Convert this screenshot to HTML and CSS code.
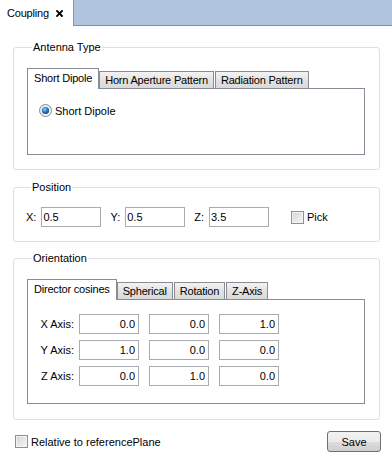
FILE: index.html
```html
<!DOCTYPE html>
<html lang="en">
<head>
    <meta charset="UTF-8">
    <title>Coupling</title>
    <link rel="stylesheet" href="styles.css">
</head>
<body>

<div class="doc-tabs">
    <div class="doc-tab">
        <span>Coupling</span>
        <svg class="close" width="7" height="7" viewBox="0 0 7 7"><path d="M1 1 L6 6 M6 1 L1 6" stroke="#000" stroke-width="1.8" stroke-linecap="square"/></svg>
    </div>
</div>

<div class="content">
    <fieldset class="group group-antenna">
        <legend>Antenna Type</legend>
        <div class="tabs">
            <div class="tab active">Short Dipole</div>
            <div class="tab">Horn Aperture Pattern</div>
            <div class="tab">Radiation Pattern</div>
        </div>
        <div class="pane pane-antenna">
            <label class="radio-line">
                <svg class="radio" width="13" height="13" viewBox="0 0 13 13">
                    <defs>
                        <radialGradient id="dot" cx="0.4" cy="0.35" r="0.7">
                            <stop offset="0" stop-color="#8fd6fb"/>
                            <stop offset="0.5" stop-color="#2a7fc8"/>
                            <stop offset="1" stop-color="#0d3f7a"/>
                        </radialGradient>
                        <linearGradient id="ring" x1="0" y1="0" x2="1" y2="1">
                            <stop offset="0" stop-color="#e2e2e2"/>
                            <stop offset="1" stop-color="#fdfdfd"/>
                        </linearGradient>
                    </defs>
                    <circle cx="6.5" cy="6.5" r="6" fill="url(#ring)" stroke="#8a8a8a"/>
                    <circle cx="6.5" cy="6.5" r="3.6" fill="url(#dot)"/>
                </svg>
                <span>Short Dipole</span>
            </label>
        </div>
    </fieldset>

    <fieldset class="group group-position">
        <legend>Position</legend>
        <div class="pos-row">
            <span class="pos-label">X:</span>
            <input class="field" type="text" value="0.5">
            <span class="pos-label">Y:</span>
            <input class="field" type="text" value="0.5">
            <span class="pos-label">Z:</span>
            <input class="field" type="text" value="3.5">
            <span class="check pick"></span>
            <span>Pick</span>
        </div>
    </fieldset>

    <fieldset class="group group-orient">
        <legend>Orientation</legend>
        <div class="tabs">
            <div class="tab active">Director cosines</div>
            <div class="tab">Spherical</div>
            <div class="tab">Rotation</div>
            <div class="tab">Z-Axis</div>
        </div>
        <div class="pane pane-orient">
            <div class="axis-row">
                <span class="axis-label">X Axis:</span>
                <input class="field num" type="text" value="0.0">
                <input class="field num" type="text" value="0.0">
                <input class="field num" type="text" value="1.0">
            </div>
            <div class="axis-row">
                <span class="axis-label">Y Axis:</span>
                <input class="field num" type="text" value="1.0">
                <input class="field num" type="text" value="0.0">
                <input class="field num" type="text" value="0.0">
            </div>
            <div class="axis-row">
                <span class="axis-label">Z Axis:</span>
                <input class="field num" type="text" value="0.0">
                <input class="field num" type="text" value="1.0">
                <input class="field num" type="text" value="0.0">
            </div>
        </div>
    </fieldset>

    <div class="footer">
        <span class="check"></span>
        <span class="footer-label">Relative to referencePlane</span>
        <button class="save">Save</button>
    </div>
</div>

</body>
</html>
```

FILE: styles.css
```css
body {
    margin: 0;
    font-family: "Liberation Sans", Arial, sans-serif;
    font-size: 11px;
    color: #000;
    background-color: #fff;
}
.doc-tabs {
    display: flex;
    height: 25px;
    background-color: #b0c4de;
    border-bottom: 1px solid #838b97;
}
.doc-tab {
    display: flex;
    align-items: center;
    width: 66px;
    height: 26px;
    padding-left: 7px;
    background-color: #fff;
    border-right: 1px solid #8d939c;
    margin-bottom: -1px;
    letter-spacing: -0.2px;
}
.doc-tab .close {
    margin-left: 7px;
    margin-top: 1px;
}
.content {
    padding: 0 12px 0 13px;
}
.group {
    margin: 0;
    padding: 0 14px 14px 13px;
    border: 1px solid #d9e0e6;
    border-radius: 3px;
    min-width: 0;
}
.group legend {
    margin-left: 5px;
    padding: 0 1px;
    line-height: 13px;
}
.group-antenna {
    margin-top: 15px;
    padding-top: 14px;
}
.group-position {
    margin-top: 11px;
    padding-top: 13px;
    padding-left: 12px;
}
.group-orient {
    margin-top: 10px;
    padding-top: 14px;
    padding-bottom: 15px;
}

/* tabs inside the groups */
.tabs {
    display: flex;
    align-items: flex-end;
    height: 20px;
}
.tab {
    height: 16px;
    line-height: 16px;
    padding: 0 5px;
    border: 1px solid #898c95;
    border-bottom: none;
    background: linear-gradient(#f3f3f3, #e3e3e3 50%, #d9d9d9);
    white-space: nowrap;
    letter-spacing: -0.2px;
}
.tab + .tab {
    margin-left: 1px;
}
.tab.active {
    position: relative;
    z-index: 1;
    height: 20px;
    line-height: 18px;
    padding: 0 6px;
    background: #fff;
    margin-bottom: -1px;
}
.tab.active + .tab {
    margin-left: 0;
}
.pane {
    border: 1px solid #898c95;
    background-color: #fff;
}
.pane-antenna {
    height: 50px;
    padding: 15px 0 0 11px;
}
.radio-line {
    display: flex;
    align-items: center;
    gap: 3px;
}
.pane-orient {
    padding: 14px 0 17px 12px;
}

/* inputs */
.field {
    box-sizing: border-box;
    width: 60px;
    height: 20px;
    margin: 0;
    padding: 0 1px;
    border: 1px solid #a9abb0;
    font-family: inherit;
    font-size: 11px;
    color: #000;
}
.field.num {
    text-align: right;
    padding-right: 3px;
    margin-right: 10px;
}
.pos-row {
    display: flex;
    align-items: center;
}
.pos-label {
    margin-right: 5px;
}
.pos-row .field {
    margin-right: 9px;
}
.pos-row .pick {
    margin-left: 13px;
    margin-right: 3px;
}
.axis-row {
    display: flex;
    align-items: center;
}
.axis-row + .axis-row {
    margin-top: 6px;
}
.axis-label {
    width: 34px;
    margin-right: 5px;
    text-align: right;
    white-space: nowrap;
}

/* checkbox */
.check {
    box-sizing: border-box;
    display: inline-block;
    width: 13px;
    height: 13px;
    border: 1px solid #8e8f8f;
    background: linear-gradient(135deg, #d4d4d4, #f7f7f7);
    box-shadow: inset 0 0 0 1px #f4f4f4;
}

/* footer */
.footer {
    display: flex;
    align-items: center;
    margin: 11px -1px 0 2px;
}
.footer-label {
    margin-left: 3px;
}
.save {
    margin-left: auto;
    width: 54px;
    height: 21px;
    padding: 0;
    border: 1px solid #707070;
    border-radius: 3px;
    background: linear-gradient(#f2f2f2, #ebebeb 50%, #dddddd 51%, #cfcfcf);
    font-family: inherit;
    font-size: 11px;
    color: #000;
}
```
